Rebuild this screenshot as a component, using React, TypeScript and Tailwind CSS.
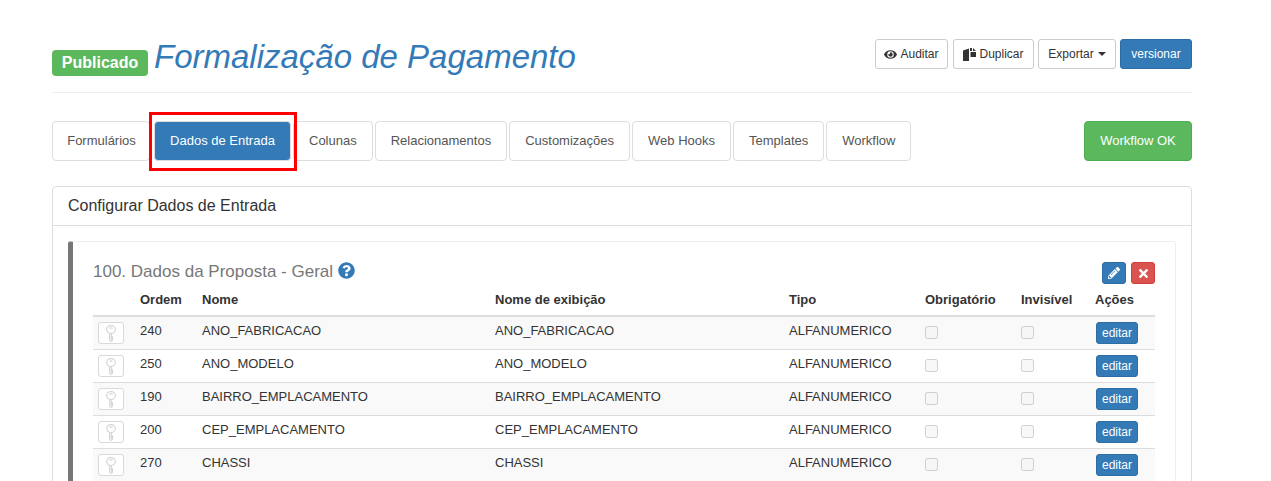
import { FaEye, FaPencilAlt, FaQuestionCircle, FaTimes } from 'react-icons/fa';

const abas = ['Colunas', 'Relacionamentos', 'Customizações', 'Web Hooks', 'Templates', 'Workflow'];

const campos = [
  { ordem: 240, nome: 'ANO_FABRICACAO' },
  { ordem: 250, nome: 'ANO_MODELO' },
  { ordem: 190, nome: 'BAIRRO_EMPLACAMENTO' },
  { ordem: 200, nome: 'CEP_EMPLACAMENTO' },
  { ordem: 270, nome: 'CHASSI' },
];

const colunas = 'grid grid-cols-[47px_62px_293px_294px_136px_96px_74px_60px]';

const CopyIcon = () => (
  <svg width="13" height="13" viewBox="0 0 13 13" className="mr-[3px]" fill="currentColor">
    <path d="M0 2.5 6 .5V13H0z" />
    <path d="M7 0h2v3H7zM10 0l3 3h-3zM7.5 4H13v5H7.5z" />
  </svg>
);

const KeyIcon = () => (
  <svg width="10" height="17" viewBox="0 0 10 17" fill="none" stroke="#d4d4d4" strokeWidth="1.1">
    <ellipse cx="5" cy="4.6" rx="4.3" ry="4" />
    <path d="M3.4 3.4c.9-.6 2.3-.6 3.2 0" />
    <path d="M3.6 8.4v6.9l1.4 1.2 1.5-1.2v-1.1H5.3v-1.1h1.2v-1.2H5.3V8.4" />
  </svg>
);

export default function App() {
  return (
    <div className="h-[481px] overflow-hidden bg-white font-['Liberation_Sans',Arial,sans-serif] text-[14px] text-[#333]">
      <div className="ml-[52px] w-[1140px]">
        {/* cabecalho */}
        <div className="flex h-[93px] items-start justify-between border-b border-[#eee] pt-[39px]">
          <div className="flex items-start">
            <span className="mt-[11px] flex h-[26px] w-[96px] items-center justify-center rounded-[4px] bg-[#5cb85c] pb-[1px] text-[16px] font-bold text-white">
              Publicado
            </span>
            <h1 className="ml-[6px] text-[33px] leading-[36px] font-normal text-[#337ab7] italic">
              Formalização de Pagamento
            </h1>
          </div>
          <div className="flex text-[12px] leading-[18px]">
            <button className="flex h-[30px] w-[73px] items-center justify-center rounded-[3px] border border-[#ccc] bg-white">
              <FaEye className="mr-[3px] text-[13px]" />
              Auditar
            </button>
            <button className="ml-[5px] flex h-[30px] w-[81px] items-center justify-center rounded-[3px] border border-[#ccc] bg-white">
              <CopyIcon />
              Duplicar
            </button>
            <button className="ml-[4px] flex h-[30px] w-[78px] items-center justify-center rounded-[3px] border border-[#ccc] bg-white">
              Exportar
              <span className="ml-[4px] h-0 w-0 border-x-[4px] border-t-[4px] border-x-transparent border-t-[#333]" />
            </button>
            <button className="ml-[4px] h-[30px] w-[72px] rounded-[3px] border border-[#2e6da4] bg-[#337ab7] text-white">
              versionar
            </button>
          </div>
        </div>

        {/* abas */}
        <div className="relative mt-[28px] flex items-start justify-between">
          <div className="flex gap-[2px] text-[13px] text-[#555]">
            <div className="flex h-[40px] w-[98px] items-center justify-center rounded-[4px] border border-[#ddd] pl-[1px]">
              Formulários
            </div>
            <div className="ml-[2px] flex h-[40px] w-[137px] items-center justify-center rounded-[4px] border border-[#ddd] bg-[#337ab7] text-white">
              Dados de Entrada
            </div>
            {abas.map((aba) => (
              <div key={aba} className="flex h-[40px] items-center rounded-[4px] border border-[#ddd] px-[15px]">
                {aba}
              </div>
            ))}
          </div>
          <button className="h-[40px] w-[108px] rounded-[4px] border border-[#4cae4c] bg-[#5cb85c] text-[13px] text-white">
            Workflow OK
          </button>
          <div className="absolute top-[-9px] left-[97px] h-[59px] w-[148px] border-[3px] border-[#ff0000]" />
        </div>

        {/* painel */}
        <div className="mt-[25px] h-[400px] rounded-[4px] border border-[#ddd]">
          <div className="flex h-[39px] items-center border-b border-[#ddd] px-[15px] text-[16px]">
            Configurar Dados de Entrada
          </div>
          <div className="mx-[15px] mt-[15px] h-[400px] rounded-[3px] border border-l-[5px] border-[#eee] border-l-[#777] pr-[20px] pl-[20px]">
            <div className="flex h-[42px] items-end justify-between">
              <div className="flex items-center text-[17px] text-[#777]">
                100. Dados da Proposta - Geral
                <FaQuestionCircle className="mb-[2px] ml-[5px] text-[17px] text-[#337ab7]" />
              </div>
              <div className="flex gap-[5px]">
                <button className="flex h-[22px] w-[24px] items-center justify-center rounded-[3px] border border-[#2e6da4] bg-[#337ab7] text-white">
                  <FaPencilAlt className="text-[12px]" />
                </button>
                <button className="flex h-[22px] w-[24px] items-center justify-center rounded-[3px] border border-[#d43f3a] bg-[#d9534f] text-white">
                  <FaTimes className="text-[13px]" />
                </button>
              </div>
            </div>

            <div className={`${colunas} h-[33px] items-center border-b-2 border-[#ddd] pt-[1px] text-[13px] font-bold`}>
              <div />
              <div>Ordem</div>
              <div>Nome</div>
              <div>Nome de exibição</div>
              <div>Tipo</div>
              <div>Obrigatório</div>
              <div>Invisível</div>
              <div>Ações</div>
            </div>

            {campos.map((campo, i) => (
              <div
                key={campo.nome}
                className={`${colunas} h-[33px] border-b border-[#ddd] text-[13px] ${i % 2 === 0 ? 'bg-[#f9f9f9]' : ''}`}
              >
                <div className="flex items-center pl-[5px]">
                  <span className="flex h-[22px] w-[26px] items-center justify-center rounded-[3px] border border-[#d9d9d9] bg-white">
                    <KeyIcon />
                  </span>
                </div>
                <div className="pt-[4px]">{campo.ordem}</div>
                <div className="pt-[4px]">{campo.nome}</div>
                <div className="pt-[4px]">{campo.nome}</div>
                <div className="pt-[4px]">ALFANUMERICO</div>
                <div className="flex items-center pb-[1px]">
                  <input type="checkbox" disabled className="m-0" />
                </div>
                <div className="flex items-center pb-[1px]">
                  <input type="checkbox" disabled className="m-0" />
                </div>
                <div className="flex items-center pl-[1px]">
                  <button className="h-[22px] w-[42px] rounded-[3px] border border-[#2e6da4] bg-[#337ab7] text-[12px] text-white">
                    editar
                  </button>
                </div>
              </div>
            ))}
          </div>
        </div>
      </div>
    </div>
  );
}
